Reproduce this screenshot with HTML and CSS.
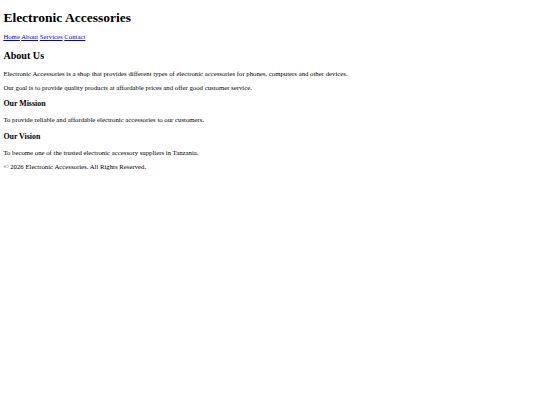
FILE: index.html
```html
<!DOCTYPE html>
<html lang="en">
<head>
<meta charset="utf-8">
<title>Electronic Accessories</title>
<link rel="stylesheet" href="styles.css">
</head>
<body>
<header class="site-header">
  <h1 class="site-title">Electronic Accessories</h1>
  <nav class="site-nav">
    <a href="#">Home</a>
    <a href="#">About</a>
    <a href="#">Services</a>
    <a href="#">Contact</a>
  </nav>
</header>
<main class="content">
  <section class="about">
    <h2 class="section-title">About Us</h2>
    <p class="text">Electronic Accessories is a shop that provides different types of electronic accessories for phones, computers and other devices.</p>
    <p class="text">Our goal is to provide quality products at affordable prices and offer good customer service.</p>
    <h3 class="sub-title">Our Mission</h3>
    <p class="text">To provide reliable and affordable electronic accessories to our customers.</p>
    <h3 class="sub-title vision">Our Vision</h3>
    <p class="text">To become one of the trusted electronic accessory suppliers in Tanzania.</p>
  </section>
</main>
<footer class="site-footer">
  <p class="text">&copy; 2026 Electronic Accessories. All Rights Reserved.</p>
</footer>
</body>
</html>
```

FILE: styles.css
```css
html {
  background: #ffffff;
}
body {
  margin: 3.375px;
  font-family: "Liberation Serif", "Times New Roman", serif;
  font-size: 6.75px;
  color: #000000;
}
.site-title {
  font-size: 13.5px;
  font-weight: bold;
  margin: 7px 0;
}
.site-nav a {
  color: #0000ee;
  text-decoration: underline;
}
.section-title {
  font-size: 10.125px;
  font-weight: bold;
  margin: 9.4px 0;
}
.sub-title {
  font-size: 7.9px;
  font-weight: bold;
  margin: 7.9px 0;
}
.sub-title.vision {
  margin: 8.9px 0;
}
.text {
  margin: 6.75px 0;
}
```
